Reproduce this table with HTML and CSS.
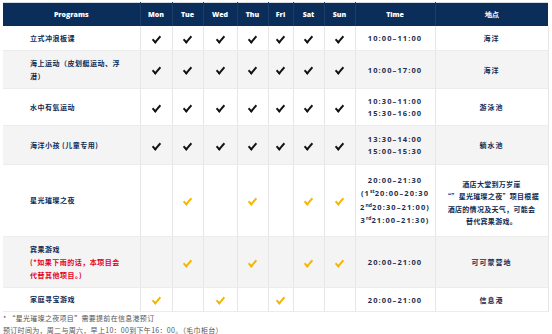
FILE: index.html
```html
<!DOCTYPE html>
<html>
<head>
    <title>Activities</title>
    <link rel="stylesheet" href="styles.css">
</head>
<body>
    <table class="schedule">
        <colgroup>
            <col class="c-prog">
            <col class="c-mon">
            <col class="c-tue">
            <col class="c-wed">
            <col class="c-thu">
            <col class="c-fri">
            <col class="c-sat">
            <col class="c-sun">
            <col class="c-time">
            <col class="c-place">
        </colgroup>
        <thead>
            <tr>
                <th>Programs</th>
                <th>Mon</th>
                <th>Tue</th>
                <th>Wed</th>
                <th>Thu</th>
                <th>Fri</th>
                <th>Sat</th>
                <th>Sun</th>
                <th>Time</th>
                <th>地点</th>
            </tr>
        </thead>
        <tbody>
            <tr class="r1">
                <td class="prog">立式冲浪板课</td>
                <td><span class="ck"></span></td>
                <td><span class="ck"></span></td>
                <td><span class="ck"></span></td>
                <td><span class="ck"></span></td>
                <td><span class="ck"></span></td>
                <td><span class="ck"></span></td>
                <td><span class="ck"></span></td>
                <td class="time">10:00–11:00</td>
                <td class="place">海洋</td>
            </tr>
            <tr class="r2">
                <td class="prog">海上运动（皮划艇运动、浮潜）</td>
                <td><span class="ck"></span></td>
                <td><span class="ck"></span></td>
                <td><span class="ck"></span></td>
                <td><span class="ck"></span></td>
                <td><span class="ck"></span></td>
                <td><span class="ck"></span></td>
                <td><span class="ck"></span></td>
                <td class="time">10:00–17:00</td>
                <td class="place">海洋</td>
            </tr>
            <tr class="r3">
                <td class="prog">水中有氧运动</td>
                <td><span class="ck"></span></td>
                <td><span class="ck"></span></td>
                <td><span class="ck"></span></td>
                <td><span class="ck"></span></td>
                <td><span class="ck"></span></td>
                <td><span class="ck"></span></td>
                <td><span class="ck"></span></td>
                <td class="time">10:30–11:00<br>15:30–16:00</td>
                <td class="place">游泳池</td>
            </tr>
            <tr class="r4">
                <td class="prog">海洋小孩 (儿童专用)</td>
                <td><span class="ck"></span></td>
                <td><span class="ck"></span></td>
                <td><span class="ck"></span></td>
                <td><span class="ck"></span></td>
                <td><span class="ck"></span></td>
                <td><span class="ck"></span></td>
                <td><span class="ck"></span></td>
                <td class="time">13:30–14:00<br>15:00–15:30</td>
                <td class="place">躺水池</td>
            </tr>
            <tr class="r5">
                <td class="prog">星光璀璨之夜</td>
                <td></td>
                <td><span class="ck gold"></span></td>
                <td></td>
                <td><span class="ck gold"></span></td>
                <td></td>
                <td><span class="ck gold"></span></td>
                <td><span class="ck gold"></span></td>
                <td class="time tall">20:00–21:30<br>(1<sup>st</sup>20:00–20:30<br>2<sup>nd</sup>20:30–21:00)<br>3<sup>rd</sup>21:00–21:30)</td>
                <td class="place note">酒店大堂到万岁崖<br>“”星光璀璨之夜”项目根据<br>酒店的情况及天气，可能会<br>替代宾果游戏。</td>
            </tr>
            <tr class="r6">
                <td class="prog">宾果游戏<br><span class="warn">(*如果下雨的话，本项目会<br>代替其他项目。)</span></td>
                <td></td>
                <td><span class="ck gold"></span></td>
                <td></td>
                <td><span class="ck gold"></span></td>
                <td></td>
                <td><span class="ck gold"></span></td>
                <td><span class="ck gold"></span></td>
                <td class="time">20:00–21:00</td>
                <td class="place">可可蒙营地</td>
            </tr>
            <tr class="r7">
                <td class="prog">家庭寻宝游戏</td>
                <td><span class="ck gold"></span></td>
                <td></td>
                <td><span class="ck gold"></span></td>
                <td></td>
                <td><span class="ck gold"></span></td>
                <td></td>
                <td></td>
                <td class="time">20:00–21:00</td>
                <td class="place">信息港</td>
            </tr>
        </tbody>
    </table>
    <p class="footnote">* “星光璀璨之夜项目”需要提前在信息港预订</p>
    <p class="footnote">预订时间为，周二与周六，早上10：00到下午16：00。（毛巾柜台）</p>
</body>
</html>
```

FILE: styles.css
```css
body {
    margin: 2px 0 0 3px;
    background-color: #fff;
    font-family: "Noto Sans", "Noto Sans CJK SC", sans-serif;
    color: #0d2b55;
}

.schedule {
    width: 545px;
    table-layout: fixed;
    border-collapse: collapse;
    border-top: 1px solid #d8dde4;
}

.c-prog { width: 137px; }
.c-mon { width: 32px; }
.c-tue { width: 31px; }
.c-wed { width: 34px; }
.c-thu { width: 31px; }
.c-fri { width: 25px; }
.c-sat { width: 31px; }
.c-sun { width: 31px; }
.c-time { width: 80px; }
.c-place { width: 113px; }

th {
    height: 23px;
    padding: 0;
    background-color: #0b2d5a;
    color: #fff;
    font-family: "Open Sans", sans-serif;
    font-size: 7px;
    font-weight: 800;
    text-align: center;
    border-left: 1px solid #1d3d68;
}

th:first-child {
    border-left: none;
}

td {
    padding: 0;
    text-align: center;
    vertical-align: middle;
    border-left: 1px solid #e6e6e6;
    border-bottom: 1px solid #ececec;
    font-size: 7px;
    font-weight: 700;
    overflow: hidden;
}

td:first-child {
    border-left: none;
}

td:last-child {
    border-right: 1px solid #e6e6e6;
}

tbody tr:nth-child(even) td {
    background-color: #f4f4f4;
}

.r1 td { height: 24px; }
.r2 td { height: 37px; }
.r3 td { height: 36px; }
.r4 td { height: 38px; }
.r5 td { height: 67px; }
.r6 td { height: 50px; }
.r7 td { height: 23px; }

td.prog {
    text-align: left;
    padding: 0 14px 0 27px;
    line-height: 13px;
    font-family: "Noto Sans CJK SC", sans-serif;
    font-weight: 700;
    letter-spacing: 0.5px;
}

.warn {
    color: #e6001b;
}

td.time {
    font-family: "Open Sans", sans-serif;
    font-size: 7.5px;
    font-weight: 700;
    letter-spacing: 1.1px;
    line-height: 12px;
    color: #1e2f4d;
}

td.time.tall {
    line-height: 13.5px;
}

td.time sup {
    font-size: 5px;
    letter-spacing: 0;
    line-height: 0;
    vertical-align: 3px;
}

td.place {
    font-family: "Noto Sans CJK SC", sans-serif;
    font-weight: 700;
    letter-spacing: 1px;
}

td.place.note {
    line-height: 12.5px;
    letter-spacing: 0.3px;
    padding-top: 4px;
}

.ck {
    display: inline-block;
    width: 7px;
    height: 3px;
    border-left: 2px solid #111;
    border-bottom: 2px solid #111;
    transform: rotate(-50deg) skewX(-8deg);
    margin-top: -3px;
}

.ck.gold {
    border-color: #f7b500;
}

.footnote {
    margin: 0;
    font-family: "Noto Sans CJK SC", sans-serif;
    font-size: 7px;
    color: #555;
    line-height: 12px;
    letter-spacing: 0.3px;
}
```
